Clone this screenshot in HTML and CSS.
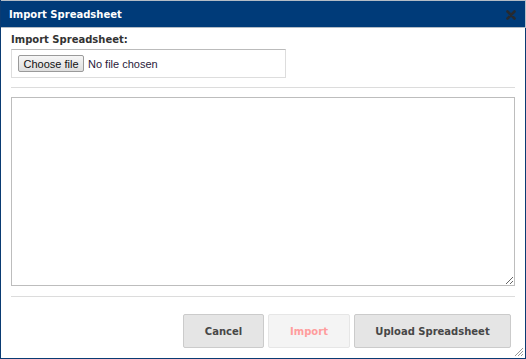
FILE: index.html
```html
<!DOCTYPE html>
<html lang="en">
<head>
    <meta charset="UTF-8" />
    <title>Import Spreadsheet</title>
    <link rel="stylesheet" href="styles.css">
</head>
<body>
    <div class="dialog">
        <div class="titlebar">
            <span class="title">Import Spreadsheet</span>
            <svg class="close" width="10" height="10" viewBox="0 0 10 10">
                <path d="M1.5 1.5 L8.5 8.5 M8.5 1.5 L1.5 8.5" stroke="#262a30" stroke-width="2.6" stroke-linecap="round" />
            </svg>
        </div>

        <div class="content">
            <label class="field-label">Import Spreadsheet:</label>
            <div class="file-box">
                <button class="file-btn">Choose file</button>
                <span class="file-name">No file chosen</span>
            </div>

            <hr class="sep" />

            <textarea class="sheet-text"></textarea>

            <hr class="sep sep-bottom" />

            <div class="actions">
                <button class="btn btn-cancel">Cancel</button>
                <button class="btn btn-import" disabled>Import</button>
                <button class="btn btn-upload">Upload Spreadsheet</button>
            </div>
        </div>

        <svg class="grip" width="10" height="10" viewBox="0 0 10 10">
            <path d="M9 1 L1 9 M9 4 L4 9 M9 7 L7 9" stroke="#999" stroke-width="1" />
        </svg>
    </div>
</body>
</html>
```

FILE: styles.css
```css
body {
    margin: 0;
    font-family: 'DejaVu Sans', Verdana, sans-serif;
    background: #fff;
}

.dialog {
    position: relative;
    width: 526px;
    height: 359px;
    box-sizing: border-box;
    border: 1px solid #0a3b73;
    border-top: none;
    background: #fff;
}

.titlebar {
    display: flex;
    align-items: center;
    justify-content: space-between;
    height: 28px;
    box-sizing: border-box;
    margin-right: -1px;
    padding: 0 9px 0 8px;
    background: #003b79;
    border: 1px solid #b3bcc6;
    border-left: none;
}

.title {
    color: #fff;
    font-size: 10px;
    font-weight: bold;
}

.close {
    margin-top: 1px;
}

.content {
    padding: 4px 10px 0 10px;
}

.field-label {
    display: block;
    font-size: 10px;
    font-weight: bold;
    color: #333;
    line-height: 16px;
    margin-bottom: 1px;
}

.file-box {
    display: flex;
    align-items: center;
    width: 275px;
    height: 29px;
    box-sizing: border-box;
    padding-left: 6px;
    border: 1px solid #ddd;
    border-top-color: #bbb;
}

.file-btn {
    height: 17px;
    width: 66px;
    padding: 0;
    font-family: 'Liberation Sans', Arial, sans-serif;
    font-size: 11px;
    color: #111;
    background: linear-gradient(#f6f6f6, #dedede);
    border: 1px solid #9a9a9a;
    border-radius: 2px;
}

.file-name {
    margin-left: 4px;
    font-family: 'Liberation Sans', Arial, sans-serif;
    font-size: 11px;
    color: #2a1a3a;
}

.sep {
    margin: 9px 0 9px 0;
    border: none;
    border-top: 1px solid #dcdcdc;
    width: 504px;
}

.sep-bottom {
    margin: 10px 0 17px 0;
}

.sheet-text {
    display: block;
    width: 504px;
    height: 189px;
    box-sizing: border-box;
    margin: 0;
    border: 1px solid #bdbdbd;
    resize: vertical;
}

.actions {
    display: flex;
    justify-content: flex-end;
    gap: 4px;
    padding-right: 4px;
}

.btn {
    height: 34px;
    box-sizing: border-box;
    font-family: 'DejaVu Sans', Verdana, sans-serif;
    font-size: 10px;
    font-weight: bold;
    color: #474747;
    background: #e5e5e5;
    border: 1px solid #cbcbcb;
    border-radius: 2px;
}

.btn-cancel {
    width: 81px;
}

.btn-import {
    width: 82px;
    color: #ff9d9d;
    background: #f4f4f4;
    border-color: #e6e6e6;
}

.btn-upload {
    width: 157px;
}

.grip {
    position: absolute;
    right: 1px;
    bottom: 1px;
}
```
